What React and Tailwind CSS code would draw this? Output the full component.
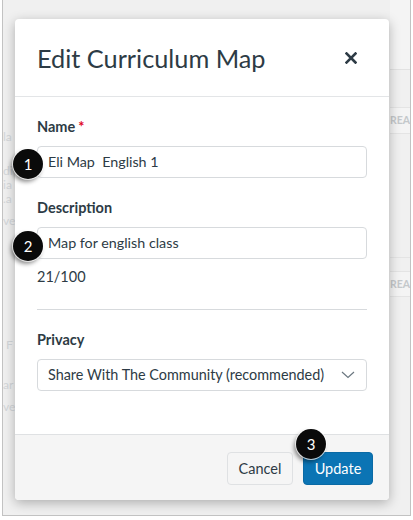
import React from "react";

function Badge({ n, className }) {
  return (
    <div
      className={
        "absolute w-[30px] h-[30px] rounded-full bg-[#0a0a0a] text-white flex items-center justify-center text-[15px] leading-none shadow-[-2px_3px_4px_rgba(0,0,0,0.45)] ring-1 ring-white/70 " +
        className
      }
    >
      {n}
    </div>
  );
}

function Label({ children, required }) {
  return (
    <div className="text-[14.5px] leading-[20px] font-bold text-[#2d3b45]">
      {children}
      {required && <span className="text-[#e0061f] ml-[3px]">*</span>}
    </div>
  );
}

function Field({ children, badge }) {
  return (
    <div className="relative mt-[9px] h-[32px] rounded-[4px] border border-[#d7dadd] flex items-center pl-[10px] text-[14.3px] text-[#2d3b45]">
      {children}
      {badge}
    </div>
  );
}

export default function App() {
  return (
    <div className="relative w-[413px] h-[520px] bg-white overflow-hidden font-['Lato','Open_Sans',sans-serif]">
      {/* background page */}
      <div className="ml-[2px] w-[409px] h-[516px] border-x border-b border-[#c2c2c2] bg-[#f0f0f0] flex">
        <div className="w-[13px] overflow-hidden text-[12px] text-[#d3d6d9] leading-none flex flex-col">
          <div className="mt-[131px]">la</div>
          <div className="mt-[22px]">di</div>
          <div className="mt-[2px]">ia</div>
          <div className="mt-[2px]">.a</div>
          <div className="mt-[10px]">ve</div>
          <div className="mt-[112px]">&nbsp;F</div>
          <div className="mt-[28px]">ar</div>
          <div className="mt-[10px]">ve</div>
        </div>
        <div className="flex-1" />
        <div className="w-[20px] overflow-hidden flex flex-col text-[10.5px] font-bold text-[#c4c8cb] leading-none">
          <div className="h-[70px] bg-[#f4f4f4] border-b border-[#e2e2e2]" />
          <div className="h-[38px] border-b border-[#e4e4e4]" />
          <div className="h-[26px] border-b border-[#e4e4e4] flex items-center bg-[#f4f4f4]">REA</div>
          <div className="h-[124px] border-b border-[#e4e4e4]" />
          <div className="h-[14px] border-b border-[#e4e4e4]" />
          <div className="h-[25px] border-b border-[#e4e4e4] flex items-center bg-[#f4f4f4]">REA</div>
          <div className="flex-1" />
        </div>
      </div>

      {/* modal */}
      <div className="absolute left-[15px] top-[19px] w-[374px] h-[481px] bg-white rounded-[4px] shadow-[0_3px_12px_rgba(0,0,0,0.28)] flex flex-col">
        <div className="h-[78px] shrink-0 border-b border-[#e3e5e7] flex items-center justify-between pl-[22px] pr-[32px]">
          <div className="text-[25.3px] leading-none text-[#2d3b45] pt-[2px]">Edit Curriculum Map</div>
          <svg width="12" height="12" viewBox="0 0 12 12">
            <path d="M1.5 1.5 L10.5 10.5 M10.5 1.5 L1.5 10.5" stroke="#2d3b45" strokeWidth="2.6" strokeLinecap="square" />
          </svg>
        </div>

        <div className="flex-1 px-[22px] pt-[20px] flex flex-col">
          <Label required>Name</Label>
          <Field badge={<Badge n="1" className="left-[-25px] top-[2px]" />}>Eli Map&nbsp; English 1</Field>

          <div className="mt-[20px]">
            <Label>Description</Label>
          </div>
          <Field badge={<Badge n="2" className="left-[-25px] top-[3px]" />}>Map for english class</Field>

          <div className="mt-[8px] text-[14.5px] leading-[20px] text-[#2d3b45]">21/100</div>

          <div className="mt-[22px] h-px bg-[#d7dadd]" />

          <div className="mt-[20px]">
            <Label>Privacy</Label>
          </div>
          <div className="mt-[9px] h-[32px] rounded-[4px] border border-[#d7dadd] flex items-center justify-between pl-[10px] pr-[11px] text-[14.4px] text-[#2d3b45]">
            <span>Share With The Community (recommended)</span>
            <svg width="14" height="8" viewBox="0 0 14 8">
              <path d="M1 1 L7 6.5 L13 1" fill="none" stroke="#6b7780" strokeWidth="1.2" />
            </svg>
          </div>
        </div>

        <div className="h-[66px] shrink-0 bg-[#f5f5f5] border-t border-[#dfe1e3] rounded-b-[4px] flex items-center justify-end gap-[10px] pr-[16px] pt-[2px]">
          <div className="w-[66px] h-[33px] rounded-[4px] bg-[#f5f5f5] border border-[#dfe1e3] flex items-center justify-center text-[14.5px] text-[#2d3b45]">
            Cancel
          </div>
          <div className="relative w-[70px] h-[33px] rounded-[4px] bg-[#0b74b4] border border-[#0a6aa5] flex items-center justify-center text-[14.5px] text-white">
            Update
            <Badge n="3" className="left-[-8px] top-[-24px]" />
          </div>
        </div>
      </div>
    </div>
  );
}
